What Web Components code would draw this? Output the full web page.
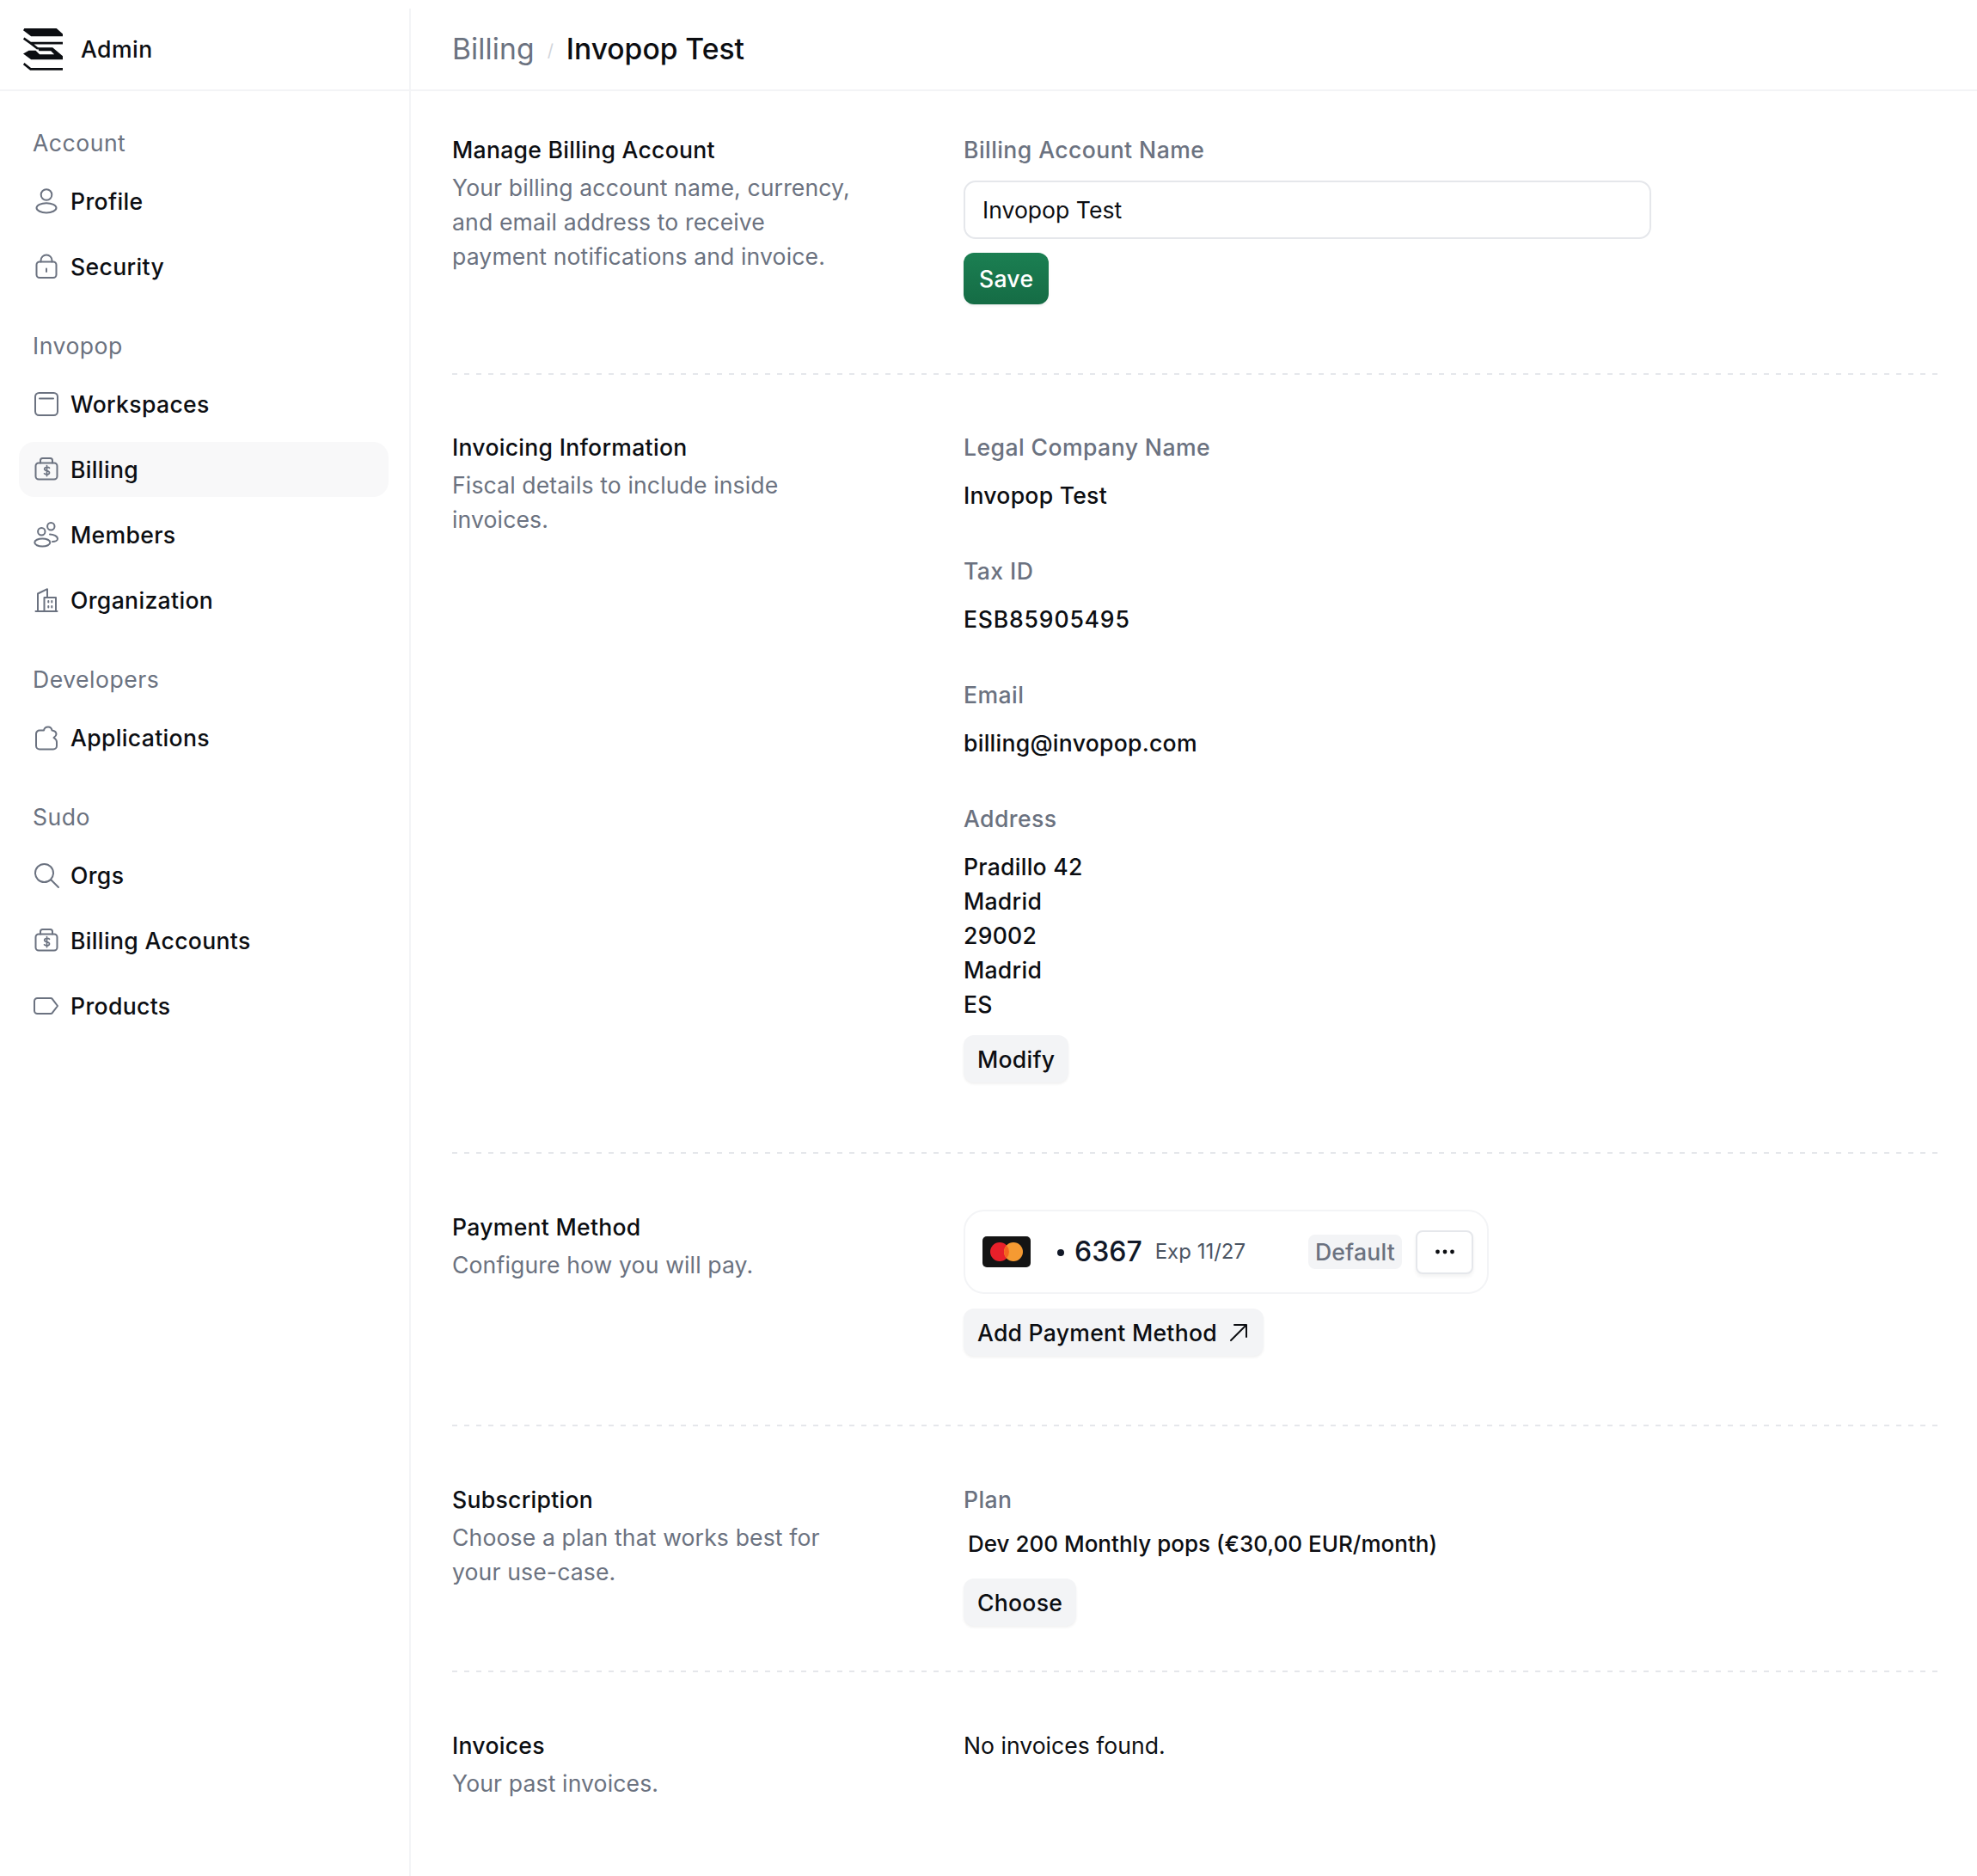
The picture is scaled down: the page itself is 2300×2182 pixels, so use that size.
<!DOCTYPE html>
<html lang="en">
<head>
<meta charset="utf-8">
<title>Billing</title>
<style>
    html, body { margin: 0; padding: 0; background: #fff; }
    body { font: 400 26.6px/40px Inter, "Liberation Sans", sans-serif; color: #0c0e12; }
</style>
</head>
<body>
<app-shell>
    <admin-sidebar slot="side">
        <nav-group label="Account">
            <nav-item icon="profile">Profile</nav-item>
            <nav-item icon="security">Security</nav-item>
        </nav-group>
        <nav-group label="Invopop">
            <nav-item icon="workspaces">Workspaces</nav-item>
            <nav-item icon="billing" active>Billing</nav-item>
            <nav-item icon="members">Members</nav-item>
            <nav-item icon="organization">Organization</nav-item>
        </nav-group>
        <nav-group label="Developers">
            <nav-item icon="applications">Applications</nav-item>
        </nav-group>
        <nav-group label="Sudo">
            <nav-item icon="orgs">Orgs</nav-item>
            <nav-item icon="billing">Billing Accounts</nav-item>
            <nav-item icon="products">Products</nav-item>
        </nav-group>
    </admin-sidebar>

    <page-header parent="Billing" title-text="Invopop Test"></page-header>

    <settings-section heading="Manage Billing Account" description="Your billing account name, currency, and email address to receive payment notifications and invoice.">
        <field-label>Billing Account Name</field-label>
        <text-box>Invopop Test</text-box>
        <ui-button variant="primary">Save</ui-button>
    </settings-section>

    <settings-section heading="Invoicing Information" description="Fiscal details to include inside invoices." style="padding-top:64px;padding-bottom:83px">
        <info-field label="Legal Company Name">Invopop Test</info-field>
        <info-field label="Tax ID"><span style="letter-spacing:.8px">ESB85905495</span></info-field>
        <info-field label="Email">billing@invopop.com</info-field>
        <info-field label="Address" tight>Pradillo 42<br>Madrid<br>29002<br>Madrid<br>ES</info-field>
        <ui-button>Modify</ui-button>
    </settings-section>

    <settings-section heading="Payment Method" description="Configure how you will pay.">
        <payment-card last4="6367" expiry="Exp 11/27"></payment-card>
        <ui-button arrow>Add Payment Method</ui-button>
    </settings-section>

    <settings-section heading="Subscription" description="Choose a plan that works best for your use-case." compact>
        <field-label>Plan</field-label>
        <plan-value>Dev 200 Monthly pops (€30,00 EUR/month)</plan-value>
        <ui-button>Choose</ui-button>
    </settings-section>

    <settings-section heading="Invoices" description="Your past invoices." last>
        No invoices found.
    </settings-section>
</app-shell>

<script>
// --- Icons (36 x 36 grid) ---
const ICONS = {
    profile: '<circle cx="18" cy="10.5" r="6.3"/><ellipse cx="18" cy="25.8" rx="11.5" ry="5.6"/>',
    security: '<rect x="6.5" y="12.5" width="23" height="18.5" rx="3.5"/><path d="M11.5 12.5V11a6.5 6.5 0 0 1 13 0v1.5"/><path d="M18 20.5v3.5"/>',
    workspaces: '<rect x="5" y="5" width="26" height="26" rx="4.5"/><path d="M10 11.5h16"/>',
    billing: '<rect x="5.5" y="10.5" width="25" height="19" rx="3.5"/><path d="M11 10.5V7.5a2.5 2.5 0 0 1 2.5-2.5h9a2.5 2.5 0 0 1 2.5 2.5v3"/><path d="M21.5 16.3c-.8-1-5.8-1.6-5.8 1.2 0 2.8 5.8 1.3 5.8 4.2 0 2.9-5 2.3-6 1.1M18.5 13.6v12" stroke-width="1.7"/>',
    members: '<circle cx="12.3" cy="14.3" r="4.2"/><circle cx="23.3" cy="8.3" r="4.2"/><ellipse cx="13.3" cy="27" rx="9" ry="4.6"/><path d="M22 17.5c4 0 9 2 9 5.3 0 2-3 3.2-6 3.2"/>',
    organization: '<path d="M5.5 31h25M8 31V10.5L19 5.2V15"/><rect x="15.5" y="15" width="13.5" height="16"/><path d="M20.3 19v1.6M24.3 19v1.6M20.3 25v1.6M24.3 25v1.6"/>',
    applications: '<path d="M10 9.5h5C15.5 7 17.5 5.5 20 5.5s4 1.5 4.5 4c3 .5 5 2 5 4.5 0 2-1.5 3-3 4 1.5 1 3.5 3 3.5 5v4.5a4 4 0 0 1-4 4H10a4 4 0 0 1-4-4V13.500a4 4 0 0 1 4-4Z"/>',
    orgs: '<circle cx="15.5" cy="15.5" r="10.5"/><path d="M23.5 23.5 32 32"/>',
    products: '<path d="M7.5 9H23a2.5 2.5 0 0 1 1.8.8L31 18l-6.2 8.2a2.5 2.5 0 0 1-1.8.8H7.5A3.5 3.5 0 0 1 4 23.5v-11A3.5 3.5 0 0 1 7.5 9Z"/>'
};

// --- Layout ---
class AppShell extends HTMLElement {
    constructor() {
        super();
        this.attachShadow({ mode: 'open' }).innerHTML = `
            <style>
                :host { display: flex; min-height: 2182px; }
                .side { flex: 0 0 478px; }
                main { flex: 1; min-width: 0; }
            </style>
            <div class="side"><slot name="side"></slot></div>
            <main><slot></slot></main>
        `;
    }
}

class AdminSidebar extends HTMLElement {
    constructor() {
        super();
        this.attachShadow({ mode: 'open' }).innerHTML = `
            <style>
                :host { display: block; box-sizing: border-box; height: 2172px; margin-top: 10px; border-right: 2px solid #f3f4f6; }
                .brand { display: flex; align-items: center; gap: 21px; height: 96px; padding-left: 27px; box-sizing: border-box; border-bottom: 2px solid #f3f4f6; margin-right: -2px; font-weight: 500; letter-spacing: .45px; }
                .brand svg { width: 46px; height: 50px; flex: none; margin-top: 2px; }
                nav { padding: 40px 24px 0 22px; }
            </style>
            <div class="brand">
                <svg viewBox="22 20 140 152" fill="#0c0e12">
                    <path d="M26 20H140L162 40V48H50L22 27Z"/>
                    <path d="M24 55 48 72H162M48 72 74 92" fill="none" stroke="#0c0e12" stroke-width="8"/>
                    <path d="M72 88H126L162 118V130H50L22 110 42 98H66L80 112H132L120 100H78Z"/>
                    <path d="M24 145 48 164H162" fill="none" stroke="#0c0e12" stroke-width="8"/>
                </svg>
                <span>Admin</span>
            </div>
            <nav><slot></slot></nav>
        `;
    }
}

class NavGroup extends HTMLElement {
    constructor() {
        super();
        this.attachShadow({ mode: 'open' }).innerHTML = `
            <style>
                :host { display: block; margin-bottom: 40px; }
                .label { padding-left: 16px; color: #6b7280; margin-bottom: 16px; line-height: 40px; letter-spacing: .5px; }
                .items { display: flex; flex-direction: column; gap: 12px; }
            </style>
            <div class="label">${this.getAttribute('label')}</div>
            <div class="items"><slot></slot></div>
        `;
    }
}

class NavItem extends HTMLElement {
    constructor() {
        super();
        const icon = ICONS[this.getAttribute('icon')];
        this.attachShadow({ mode: 'open' }).innerHTML = `
            <style>
                :host { display: flex; align-items: center; gap: 10px; height: 64px; padding-left: 14px; border-radius: 18px; font-weight: 450; letter-spacing: .33px; }
                :host([active]) { background: #f8f8f9; }
                svg { width: 36px; height: 36px; flex: none; fill: none; stroke: #6b7280; stroke-width: 2; stroke-linecap: round; stroke-linejoin: round; }
            </style>
            <svg viewBox="0 0 36 36">${icon}</svg>
            <slot></slot>
        `;
    }
}

class PageHeader extends HTMLElement {
    constructor() {
        super();
        this.attachShadow({ mode: 'open' }).innerHTML = `
            <style>
                :host { display: flex; align-items: center; box-sizing: border-box; height: 106px; padding: 10px 0 0 48px; border-bottom: 2px solid #f3f4f6; font-size: 33.6px; line-height: 48px; }
                .parent { color: #6b7280; letter-spacing: .1px; }
                .sep { color: #d1d5db; font-size: 20px; margin: 4px 15px 0 15px; }
                .title { font-weight: 500; }
            </style>
            <span class="parent">${this.getAttribute('parent')}</span>
            <span class="sep">/</span>
            <span class="title">${this.getAttribute('title-text')}</span>
        `;
    }
}

// --- Sections ---
class SettingsSection extends HTMLElement {
    constructor() {
        super();
        this.attachShadow({ mode: 'open' }).innerHTML = `
            <style>
                :host { display: grid; grid-template-columns: 595px 1fr; margin: 0 44px 0 48px; padding: 65px 0 82px; background: repeating-linear-gradient(to right, #e5e7eb 0 6px, transparent 6px 14px) left bottom / 100% 2px no-repeat; }
                :host(:first-of-type) { padding-top: 48px; }
                :host([compact]) { padding-bottom: 54px; }
                :host([last]) { background: none; }
                h3 { margin: 0 0 4px; font: inherit; font-weight: 500; letter-spacing: .27px; }
                p { margin: 0; color: #6b7280; width: 470px; letter-spacing: .12px; }
                .content { min-width: 0; }
            </style>
            <div>
                <h3>${this.getAttribute('heading')}</h3>
                <p>${this.getAttribute('description')}</p>
            </div>
            <div class="content"><slot></slot></div>
        `;
    }
}

class FieldLabel extends HTMLElement {
    constructor() {
        super();
        this.attachShadow({ mode: 'open' }).innerHTML = `
            <style>:host { display: block; color: #6b7280; font-weight: 450; letter-spacing: .42px; margin-bottom: 16px; }</style>
            <slot></slot>
        `;
    }
}

class InfoField extends HTMLElement {
    constructor() {
        super();
        this.attachShadow({ mode: 'open' }).innerHTML = `
            <style>
                :host { display: block; margin-bottom: 48px; }
                :host([tight]) { margin-bottom: 16px; }
                .label { color: #6b7280; font-weight: 450; letter-spacing: .42px; margin-bottom: 16px; }
                .value { font-weight: 450; letter-spacing: .25px; }
            </style>
            <div class="label">${this.getAttribute('label')}</div>
            <div class="value"><slot></slot></div>
        `;
    }
}

class PlanValue extends HTMLElement {
    constructor() {
        super();
        this.attachShadow({ mode: 'open' }).innerHTML = `
            <style>:host { display: block; padding-left: 5px; margin: -4px 0 20px; font-size: 26px; font-weight: 450; }</style>
            <slot></slot>
        `;
    }
}

class TextBox extends HTMLElement {
    constructor() {
        super();
        this.attachShadow({ mode: 'open' }).innerHTML = `
            <style>
                :host { display: flex; align-items: center; box-sizing: border-box; width: 800px; height: 68px; padding: 0 20px; margin-bottom: 16px; border: 2px solid #e5e7eb; border-radius: 14px; }
            </style>
            <slot></slot>
        `;
    }
}

class UiButton extends HTMLElement {
    constructor() {
        super();
        const arrow = this.hasAttribute('arrow')
            ? '<svg viewBox="0 0 22 22" fill="none" stroke="#0c0e12" stroke-width="2" stroke-linecap="round" stroke-linejoin="round"><path d="M2 20 20 2M6 2h14v14"/></svg>'
            : '';
        this.attachShadow({ mode: 'open' }).innerHTML = `
            <style>
                :host { display: inline-flex; align-items: center; gap: 14px; box-sizing: border-box; height: 55px; padding: 0 16px; border-radius: 12px; background: #f3f4f6; box-shadow: 0 2px 3px rgba(0,0,0,.06); font-weight: 500; letter-spacing: .25px; vertical-align: top; }
                :host([arrow]) { padding-right: 18px; }
                :host([variant="primary"]) { height: 60px; padding: 0 18px; background: linear-gradient(#1b7f52, #156c45); color: #fff; }
                svg { width: 22px; height: 22px; flex: none; }
            </style>
            <slot></slot>${arrow}
        `;
    }
}

class PaymentCard extends HTMLElement {
    constructor() {
        super();
        this.attachShadow({ mode: 'open' }).innerHTML = `
            <style>
                :host { display: flex; align-items: center; box-sizing: border-box; width: 611px; height: 98px; margin-bottom: 17px; padding: 0 16px 0 20px; border: 2px solid #f3f4f6; border-radius: 24px; }
                .brand { width: 56px; height: 36px; flex: none; }
                .dot { width: 8px; height: 8px; border-radius: 50%; background: #111827; margin: 2px 12px 0 31px; flex: none; }
                .num { font-size: 32px; font-weight: 450; color: #111827; }
                .exp { font-size: 24px; color: #4b5563; margin-left: 15px; flex: 1; }
                .badge { height: 40px; line-height: 40px; padding: 0 8px; border-radius: 8px; background: #f3f4f6; color: #6b7280; font-weight: 450; letter-spacing: .2px; margin-left: -2px; }
                .more { display: flex; align-items: center; justify-content: center; box-sizing: border-box; width: 67px; height: 51px; margin-left: 16px; border: 2px solid #e5e7eb; border-radius: 8px; background: #fff; box-shadow: 0 3px 4px rgba(0,0,0,.05); }
                .more svg { width: 24px; height: 6px; }
            </style>
            <svg class="brand" viewBox="0 0 56 36">
                <rect width="56" height="36" rx="5" fill="#141414"/>
                <circle cx="20" cy="18" r="11" fill="#e8202a"/>
                <circle cx="36" cy="18" r="11" fill="#f59a32"/>
                <path d="M28 10.5a11 11 0 0 1 0 15 11 11 0 0 1 0-15Z" fill="#f4641f"/>
            </svg>
            <span class="dot"></span>
            <span class="num">${this.getAttribute('last4')}</span>
            <span class="exp">${this.getAttribute('expiry')}</span>
            <span class="badge">Default</span>
            <span class="more"><svg viewBox="0 0 24 6" fill="#0c0e12"><circle cx="3.5" cy="3" r="2.4"/><circle cx="12" cy="3" r="2.4"/><circle cx="20.5" cy="3" r="2.4"/></svg></span>
        `;
    }
}

customElements.define('app-shell', AppShell);
customElements.define('admin-sidebar', AdminSidebar);
customElements.define('nav-group', NavGroup);
customElements.define('nav-item', NavItem);
customElements.define('page-header', PageHeader);
customElements.define('settings-section', SettingsSection);
customElements.define('field-label', FieldLabel);
customElements.define('info-field', InfoField);
customElements.define('plan-value', PlanValue);
customElements.define('text-box', TextBox);
customElements.define('ui-button', UiButton);
customElements.define('payment-card', PaymentCard);
</script>
</body>
</html>
